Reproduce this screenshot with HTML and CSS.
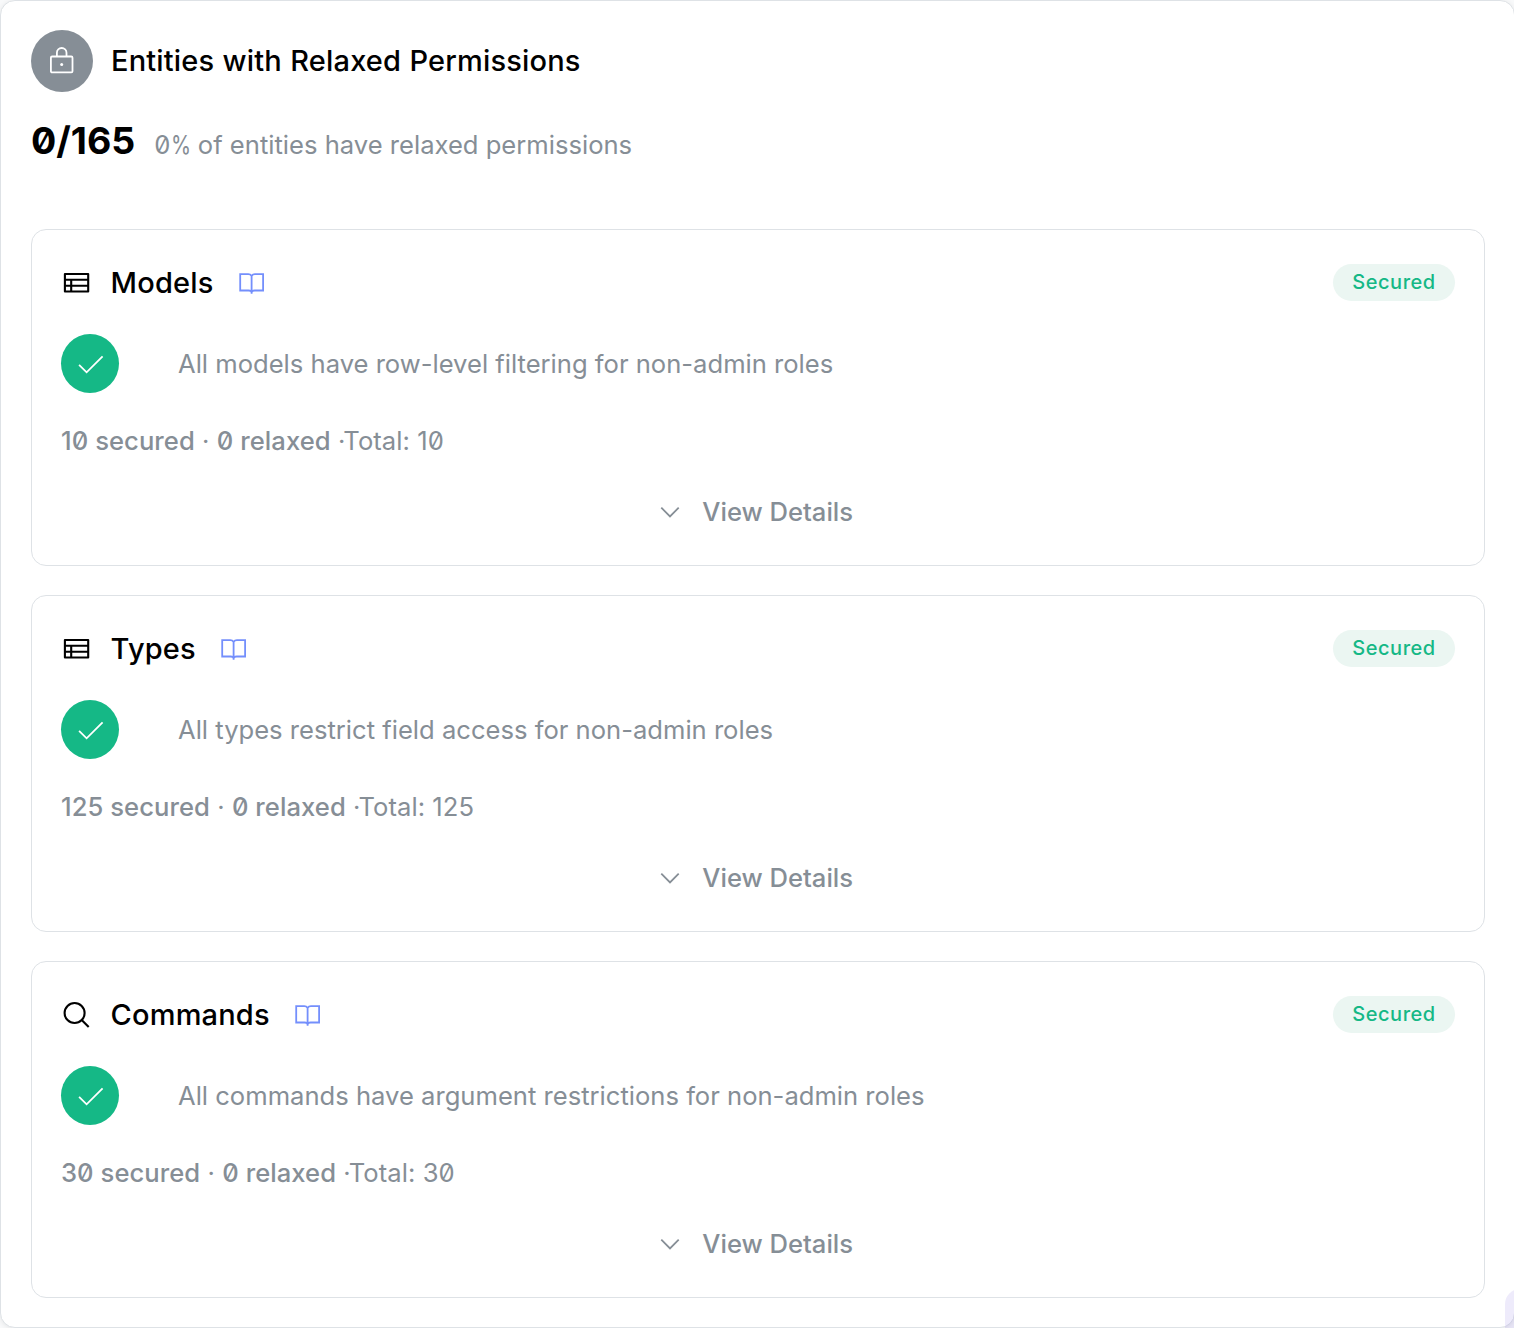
FILE: index.html
```html
<!DOCTYPE html>
<html lang="en">
<head>
<meta charset="utf-8">
<title>Entities with Relaxed Permissions</title>
<link rel="stylesheet" href="styles.css">
</head>
<body>
<svg class="sprite" aria-hidden="true">
  <symbol id="table" viewBox="0 0 30 30"><path stroke-linejoin="round" d="M3.900 6h23.300v17.500H3.900zM3.900 11.700h23.300M3.900 17.700h23.300M10.200 11.700v11.800" /></symbol>
  <symbol id="book" viewBox="0 0 30 30"><path d="M14.600 7.900C13.700 6.600 12.700 6.200 11.300 6.200H3.200v16.300h8.300c1.700 0 3.100.500 3.100 2M14.600 7.900C15.500 6.600 16.500 6.200 17.900 6.200H26.100v16.300h-8.400c-1.700 0-3.100.500-3.100 2M14.600 7.900V25.800" /></symbol>
  <symbol id="search" viewBox="0 0 30 30"><circle cx="13.600" cy="13" r="10" /><path d="M20.700 20.100l7 6.900" /></symbol>
  <symbol id="check" viewBox="0 0 30 30"><path d="M4.100 15.800l7.500 7.500L27.600 7.300" /></symbol>
  <symbol id="chevron" viewBox="0 0 30 30"><path d="M6.300 11.700l8.700 8.700 8.700-8.700" /></symbol>
  <symbol id="lock" viewBox="0 0 30 30"><rect x="3.900" y="10.500" width="21.600" height="15.900" rx="1.200" /><path d="M9.900 10.500V6.800a4.800 4.800 0 0 1 9.600 0v3.700" /><circle class="dot" cx="14.700" cy="18.500" r="1.500" /></symbol>
</svg>
<main class="panel">
  <header class="head">
    <span class="lock"><svg class="icon"><use href="#lock"/></svg></span>
    <h1>Entities with Relaxed Permissions</h1>
  </header>
  <div class="summary"><strong>0/165</strong><span>0<i class="percent">%</i> of entities have relaxed permissions</span></div>
  <div class="cards">
    <section class="card">
      <div class="title-row">
        <svg class="icon thick"><use href="#table"/></svg><h2>Models</h2><svg class="icon link"><use href="#book"/></svg>
        <span class="badge">Secured</span>
      </div>
      <div class="status"><span class="ok"><svg class="icon"><use href="#check"/></svg></span><p>All models have row-level filtering for non-admin roles</p></div>
      <p class="counts"><b>10 secured</b> · <b>0 relaxed</b> ·Total: 10</p>
      <div class="more"><svg class="icon"><use href="#chevron"/></svg><span>View Details</span></div>
    </section>
    <section class="card">
      <div class="title-row">
        <svg class="icon thick"><use href="#table"/></svg><h2>Types</h2><svg class="icon link"><use href="#book"/></svg>
        <span class="badge">Secured</span>
      </div>
      <div class="status"><span class="ok"><svg class="icon"><use href="#check"/></svg></span><p>All types restrict field access for non-admin roles</p></div>
      <p class="counts"><b>125 secured</b> · <b>0 relaxed</b> ·Total: 125</p>
      <div class="more"><svg class="icon"><use href="#chevron"/></svg><span>View Details</span></div>
    </section>
    <section class="card">
      <div class="title-row">
        <svg class="icon thick"><use href="#search"/></svg><h2>Commands</h2><svg class="icon link"><use href="#book"/></svg>
        <span class="badge">Secured</span>
      </div>
      <div class="status"><span class="ok"><svg class="icon"><use href="#check"/></svg></span><p>All commands have argument restrictions for non-admin roles</p></div>
      <p class="counts"><b>30 secured</b> · <b>0 relaxed</b> ·Total: 30</p>
      <div class="more"><svg class="icon"><use href="#chevron"/></svg><span>View Details</span></div>
    </section>
  </div>
</main>
<div class="floating"></div>
</body>
</html>
```
FILE: styles.css
```css
* { box-sizing: border-box; margin: 0; }
body { background: #f8f9fa; font-family: Inter, sans-serif; font-feature-settings: "zero"; color: #000; overflow: hidden; }
.sprite { display: none; }
.icon { width: 30px; height: 30px; flex: none; fill: none; stroke: currentColor; stroke-width: 1.8; }
.thick { stroke-width: 2.1; }
.dot { fill: currentColor; stroke: none; }
.panel { width: 1515px; height: 1328px; padding: 29px 29px 29px 30px; background: #fff; border: 1px solid #dee2e6; border-radius: 15px; box-shadow: 0 1px 5px rgba(0, 0, 0, 0.08); }
.head { display: flex; align-items: center; gap: 18px; height: 62px; }
.lock { width: 62px; height: 62px; border-radius: 50%; background: #868e96; color: #fff; display: grid; place-items: center; }
h1, h2 { font-size: 29px; font-weight: 500; line-height: 40px; letter-spacing: 0.17px; white-space: nowrap; }
h1 { word-spacing: 0.4px; }
.summary { display: flex; align-items: baseline; gap: 19px; height: 137px; padding-top: 20px; line-height: 58px; }
.summary strong { font-size: 37.5px; font-weight: 700; }
.summary span { font-size: 25.6px; color: #868e96; }
.percent { display: inline-block; font-style: normal; transform: scaleX(0.8); transform-origin: left; margin-right: -5px; }
.cards { display: flex; flex-direction: column; gap: 29px; }
.card { height: 337px; border: 1px solid #dee2e6; border-radius: 15px; padding: 29px; display: flex; flex-direction: column; }
.title-row { display: flex; align-items: center; height: 47px; }
.title-row h2 { margin: 0 23.5px 0 19.6px; }
.link { color: #748ffc; }
.badge { margin-left: auto; width: 122px; height: 36.5px; border-radius: 19px; background: #ebf6f2; color: #15b886; font-size: 20px; font-weight: 500; line-height: 36px; text-align: center; letter-spacing: 0.55px; }
.status { display: flex; align-items: center; gap: 59px; height: 59px; margin-top: 28px; color: #868e96; }
.ok { width: 58px; height: 59px; border-radius: 50%; background: #15b886; color: #fff; display: grid; place-items: center; }
p { font-size: 25.6px; line-height: 40px; }
.counts { margin-top: 28px; color: #868e96; letter-spacing: 0.06px; }
.counts b { font-weight: 500; }
.more { display: flex; align-items: center; justify-content: center; gap: 17.4px; margin-top: 30px; padding-right: 8px; height: 40px; color: #868e96; font-size: 25.6px; font-weight: 500; }
.floating { position: absolute; left: 1505px; top: 1289px; width: 60px; height: 60px; background: rgba(100, 70, 220, 0.11); border-radius: 15px; }
```
